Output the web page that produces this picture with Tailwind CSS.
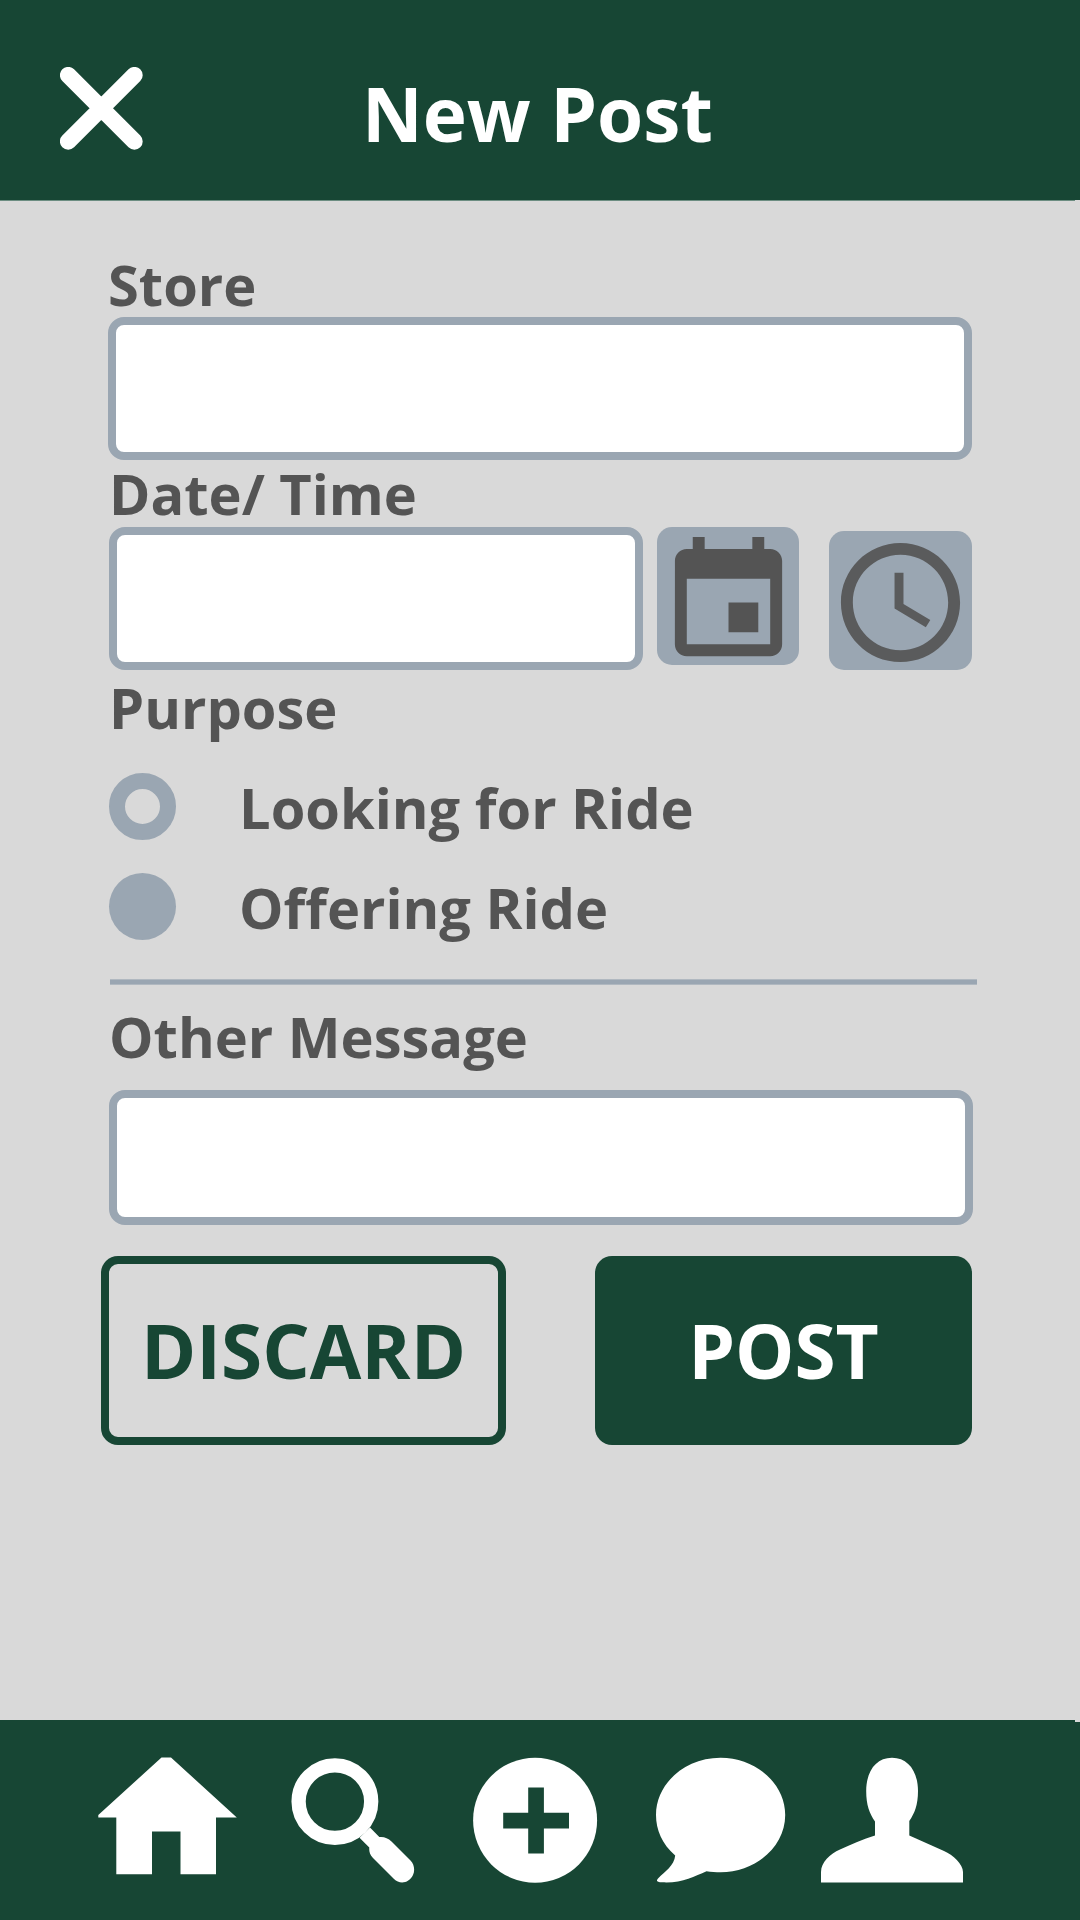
<!DOCTYPE html>
<html lang="en">
<head>
<meta charset="utf-8">
<title>New Post</title>
<script src="https://cdn.jsdelivr.net/npm/@tailwindcss/browser@4"></script>
</head>
<body class="flex h-[1920px] w-[1080px] flex-col overflow-hidden bg-[#d9d9d9] font-['Open_Sans',sans-serif] font-bold text-[#545454]">
  <header class="relative flex h-[200px] shrink-0 bg-[#174634] pl-[60px]">
    <button class="mt-[67px] h-[83px] w-[83px]" aria-label="Close">
      <svg class="block" width="83" height="83" viewBox="0 0 83 83" fill="none" stroke="#fff" stroke-width="16.6" stroke-linecap="round"><path d="M8.2 8.2 74.4 74.4M74.4 8.2 8.2 74.4"/></svg>
    </button>
    <h1 class="mt-[73px] ml-[219px] h-20 text-[74.7px] leading-[80px] whitespace-nowrap text-white">New Post</h1>
    <div class="absolute top-full left-0 h-px w-[1075px] bg-[#6c8d81]"></div>
  </header>

  <main class="flex flex-1 flex-col pl-[108px] text-[56px] leading-[64px]">
    <label class="mt-[52px]">Store</label>
    <div class="mt-px h-[143px] w-[864px] rounded-2xl border-8 border-[#9aa6b2] bg-white"></div>
    <label class="mt-px pl-[1px]">Date/ Time</label>
    <div class="mt-px flex h-[144px] pl-[1px]">
      <div class="mt-px h-[143px] w-[534px] rounded-2xl border-8 border-[#9aa6b2] bg-white"></div>
      <button class="mt-px ml-[14px] flex h-[138px] w-[142px] items-start rounded-[15px] bg-[#9aa6b2]" aria-label="Pick date">
        <svg class="mt-[4px] block shrink-0" width="143" height="143" viewBox="0 0 24 24" fill="#545454"><path d="M17 12h-5v5h5v-5zM16 1v2H8V1H6v2H5c-1.11 0-1.99.9-1.99 2L3 19c0 1.1.89 2 2 2h14c1.1 0 2-.9 2-2V5c0-1.1-.9-2-2-2h-1V1h-2zm3 18H5V8h14v11z"/></svg>
      </button>
      <button class="mt-[5px] ml-[30px] flex h-[139px] w-[143px] items-start rounded-[15px] bg-[#9aa6b2]" aria-label="Pick time">
        <svg class="block shrink-0" width="143" height="143" viewBox="0 0 24 24" fill="#5a5b5c"><path d="M11.99 2C6.47 2 2 6.48 2 12s4.47 10 9.99 10C17.52 22 22 17.52 22 12S17.52 2 11.99 2zM12 20c-4.42 0-8-3.58-8-8s3.58-8 8-8 8 3.58 8 8-3.58 8-8 8zm.5-13H11v6l5.25 3.15.75-1.23-4.5-2.67z"/></svg>
      </button>
    </div>
    <h2 class="mt-[5px] pl-[1px]">Purpose</h2>
    <div class="mt-[34px] flex h-[67px] pl-[1px]">
      <span class="size-[67px] rounded-full border-16 border-[#9aa6b2]"></span>
      <span class="mt-[2px] ml-[63px]">Looking for Ride</span>
    </div>
    <div class="mt-[33px] flex h-[67px] pl-[1px]">
      <span class="size-[67px] rounded-full bg-[#9aa6b2]"></span>
      <span class="mt-[2px] ml-[63px]">Offering Ride</span>
    </div>
    <div class="mt-[39px] ml-[2px] h-[6px] w-[867px] border-y border-[#b0b8c0] bg-[#9aa6b2]"></div>
    <label class="mt-[19px] pl-[1px]">Other Message</label>
    <div class="mt-[22px] ml-[1px] h-[135px] w-[864px] rounded-2xl border-8 border-[#9aa6b2] bg-white"></div>
    <div class="mt-[31px] -ml-[7px] flex h-[189px] text-[74.7px] leading-[80px]">
      <button class="flex w-[405px] items-start justify-center rounded-[17px] border-8 border-[#174634] pt-[46px] text-[#174634]">DISCARD</button>
      <button class="ml-[89px] flex w-[377px] items-start justify-center rounded-[17px] bg-[#174634] pt-[54px] text-white">POST</button>
    </div>
  </main>

  <nav class="relative flex h-[200px] shrink-0 items-start bg-[#174634] pt-[37px] pl-[98px]">
    <svg class="shrink-0" width="140" height="126" viewBox="98 1757 140 126" fill="#fff"><path d="M161.5 1757.5H171L236.8 1817.5H216V1874.2H180.5V1831.5H152V1874.2H116.3V1817.5H98.3V1815Z"/></svg>
    <svg class="ml-[53px] shrink-0" width="124" height="126" viewBox="291 1757 124 126"><circle cx="334.9" cy="1801.6" r="36.3" fill="none" stroke="#fff" stroke-width="14.3"/><path fill="#fff" d="M370 1827.5L379.3 1837C384 1836.5 388 1838 391.5 1841.5L410.5 1860.5C414.5 1864.5 415 1871 413 1875C409 1883.5 399.5 1884.5 394 1879L373 1858C369.5 1854.5 369 1851 369.3 1847.5L359.5 1837.7Z"/></svg>
    <svg class="ml-[58px] shrink-0" width="125" height="126" viewBox="473 1757 125 126"><ellipse cx="535.1" cy="1820.2" rx="62" ry="62.5" fill="#fff"/><path fill="#174634" d="M528.2 1787.5h15.7v25.2h25.1v15.7h-25.1v25.2h-15.7v-25.2h-25v-15.7h25z"/></svg>
    <svg class="ml-[57px] shrink-0" width="131" height="126" viewBox="655 1757 131 126" fill="#fff"><path d="M720.5 1757.8C756 1757.8 785.2 1783.5 785.2 1815C785.2 1846.5 756 1872.2 720.5 1872.2C716 1872.2 711 1872 706.5 1871.2C694 1876.5 681 1883.5 662 1882.3C657 1882 655.5 1881 658.5 1878C664 1872.5 674.5 1865.5 675.2 1855.5C662 1844 656 1830 656 1815C656 1783.5 685 1757.8 720.5 1757.8Z"/></svg>
    <svg class="ml-[35px] shrink-0" width="142" height="126" viewBox="821 1757 142 126" fill="#fff"><path d="M892 1757.8C908.5 1757.8 918 1772 918 1791C918 1805 914.5 1813.5 909.3 1821V1835.5L944 1851C953 1855 963 1864 963 1872V1882.5H821V1872C821 1862 830 1854 840 1849.5C851 1844.5 863 1839 875 1835.5V1821.5C869.5 1813.5 866.2 1805 866.2 1791C866.2 1772 875.5 1757.8 892 1757.8Z"/></svg>
    <div class="absolute top-0 right-0 h-[2px] w-[5px] bg-[#d9d9d9]"></div>
  </nav>
</body>
</html>
